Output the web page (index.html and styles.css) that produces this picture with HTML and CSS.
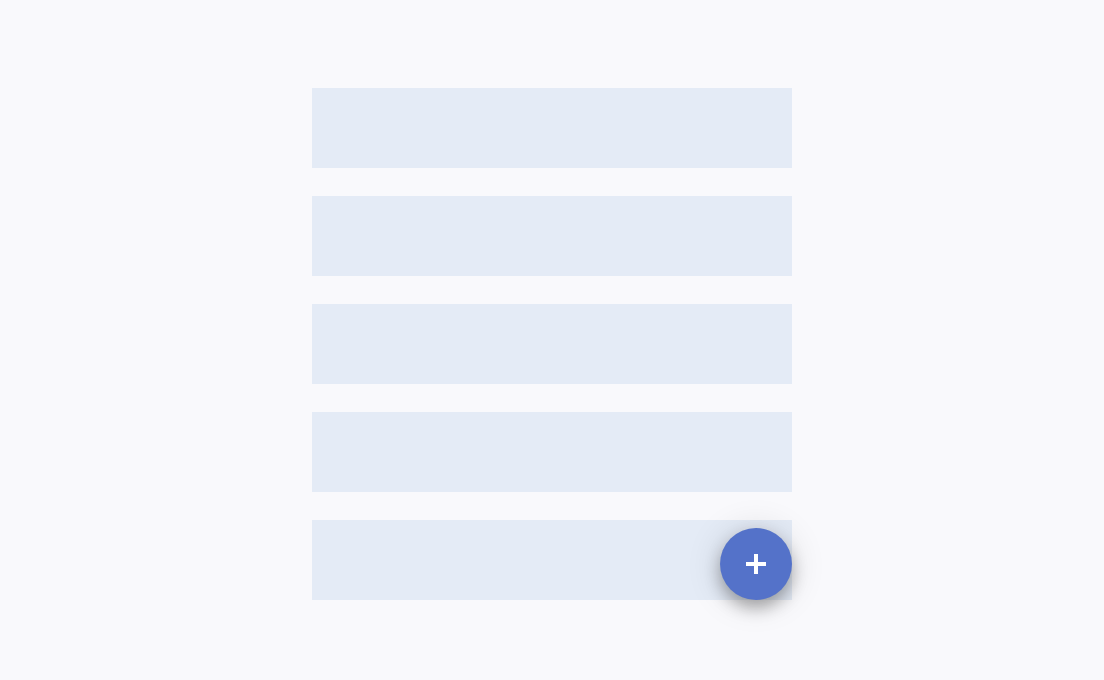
FILE: index.html
```
<!DOCTYPE html>
<html lang="en">

<head>
    <meta charset="UTF-8" />
    <meta name="viewport" content="width=device-width,initial-scale=1.0" />
    <title>List</title>
    <link rel="stylesheet" href="styles.css">
</head>

<body>
    <main class="list-wrap">
        <ul class="list">
            <li class="list-item"></li>
            <li class="list-item"></li>
            <li class="list-item"></li>
            <li class="list-item"></li>
            <li class="list-item"></li>
        </ul>
        <button class="fab" type="button" aria-label="Add">
            <svg class="fab-icon" viewBox="0 0 20 20" aria-hidden="true">
                <path d="M8 0h4v8h8v4h-8v8H8v-8H0V8h8z" fill="#fff" />
            </svg>
        </button>
    </main>
</body>

</html>
```

FILE: styles.css
```
body {
    margin: 0;
    font-family: "Liberation Sans", Arial, sans-serif;
    background: #f9f9fc;
}

.list-wrap {
    position: relative;
    max-width: 480px;
    margin: 88px auto 80px;
}

.list {
    display: flex;
    flex-direction: column;
    gap: 28px;
    margin: 0;
    padding: 0;
    list-style: none;
}

.list-item {
    height: 80px;
    background: #e4ebf6;
}

/* floating add button over the last row */
.fab {
    position: absolute;
    right: 0;
    bottom: 0;
    display: flex;
    align-items: center;
    justify-content: center;
    width: 72px;
    height: 72px;
    padding: 0;
    border: none;
    border-radius: 50%;
    background: #5472c9;
    box-shadow: 0 8px 16px rgba(0, 0, 0, 0.3), 0 2px 36px rgba(0, 0, 0, 0.14);
    cursor: pointer;
}

.fab-icon {
    width: 20px;
    height: 20px;
}
```
